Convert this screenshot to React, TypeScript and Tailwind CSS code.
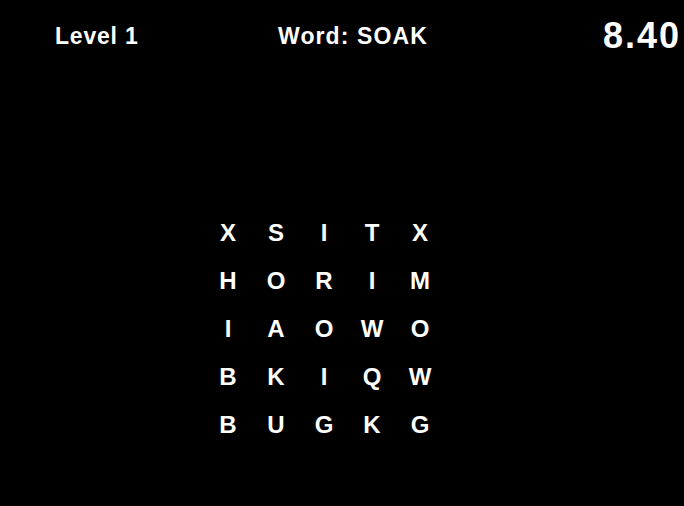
const grid = [
    ['X', 'S', 'I', 'T', 'X'],
    ['H', 'O', 'R', 'I', 'M'],
    ['I', 'A', 'O', 'W', 'O'],
    ['B', 'K', 'I', 'Q', 'W'],
    ['B', 'U', 'G', 'K', 'G'],
];

export default function App() {
    return (
        <div className="w-[684px] h-[506px] bg-black text-white overflow-hidden font-['Liberation_Sans',Arial,sans-serif] font-bold">
            <div className="flex items-center h-[72px]">
                <div className="w-[230px] pl-[55px] text-[23px] tracking-[0.8px]">Level 1</div>
                <div className="w-[370px] pl-[48px] text-[23px] tracking-[1.1px]">Word: SOAK</div>
                <div className="flex-1 text-[36px] tracking-[2px] pl-[3px]">8.40</div>
            </div>

            <div className="ml-[204px] mt-[137px] grid grid-cols-5 w-[240px]">
                {grid.flat().map((letter, i) => (
                    <div key={i} className="h-[48px] leading-[48px] text-center text-[24px]">
                        {letter}
                    </div>
                ))}
            </div>
        </div>
    );
}
